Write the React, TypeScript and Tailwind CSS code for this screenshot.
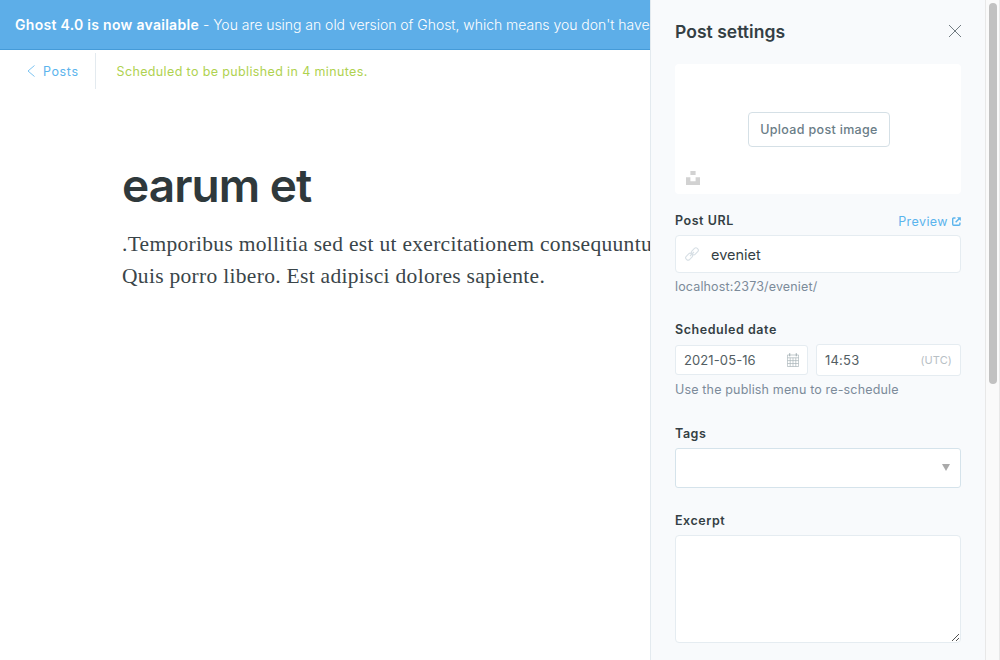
import type { ReactNode } from "react";

function Banner() {
  return (
    <div className="flex h-[50px] shrink-0 items-center overflow-hidden whitespace-nowrap border-b border-[#459bd8] bg-[#5daee8] pl-[15px] text-[14px] leading-5 text-white">
      <strong className="font-semibold tracking-[0.29px]">Ghost 4.0 is now available</strong>
      <span className="whitespace-pre font-light tracking-[-0.03px]">
        {" - You are using an old version of Ghost, which means you don't have"}
      </span>
    </div>
  );
}

function EditorHeader() {
  return (
    <header className="flex h-[43px] shrink-0 items-center text-[12.5px] leading-5">
      <a className="mb-px flex h-9 w-24 items-center border-r border-[#e3eaef] pl-[27px] text-[#5bb4ed]">
        <svg className="mr-2 h-3 w-2" viewBox="0 0 8 12" fill="none" stroke="currentColor" strokeWidth="0.8">
          <path d="M7.5 .5 1 6l6.5 5.5" />
        </svg>
        <span className="pt-0.5 tracking-[0.6px]">Posts</span>
      </a>
      <span className="pl-[20.5px] tracking-[0.37px] text-[#afd250]">Scheduled to be published in 4 minutes.</span>
    </header>
  );
}

function Label({ children }: { children: ReactNode }) {
  return <label className="-mb-px pt-px text-[12.5px] font-semibold leading-4 tracking-[0.55px] text-[#343f44]">{children}</label>;
}

function LinkIcon() {
  return (
    <svg className="h-[14px] w-[14px]" viewBox="0 0 14 14" fill="none" stroke="#d7dfe5" strokeWidth="1.1">
      <rect x="0.4" y="7.4" width="7.4" height="4.6" rx="2" transform="rotate(-45 4.1 9.7)" />
      <rect x="6.2" y="2" width="7.4" height="4.6" rx="2" transform="rotate(-45 9.9 4.3)" />
      <path d="m5 9 4-4" />
    </svg>
  );
}

function ExternalIcon() {
  return (
    <svg className="mb-px h-[9px] w-[9px]" viewBox="0 0 9 9" fill="none" stroke="#5bb4ed" strokeWidth="1.4">
      <path d="M3.5 1H1.7Q.7 1 .7 2v5.2q0 1 1 1h5.2q1 0 1-1V5.5" />
      <path d="M3.6 5.3 7.6 1.3" />
      <path d="M5 .2h3.8V4Z" fill="#5bb4ed" stroke="none" />
    </svg>
  );
}

function CalendarIcon() {
  return (
    <svg className="h-[14px] w-3" viewBox="0 0 12 14" fill="none" stroke="#a9b4b9" strokeWidth="0.7">
      <path d="M.4 2h11.2v11.5H.4zM.4 4.8h11.2M.4 7.6h11.2M.4 10.5h11.2M3.2 4.8v8.7M6 4.8v8.7M8.8 4.8v8.7" />
      <path d="M2.7.3v3M9.3.3v3" strokeWidth="1.2" />
    </svg>
  );
}

function PostSettings() {
  return (
    <aside className="flex h-[660px] w-[335px] shrink-0 flex-col overflow-hidden border-l border-[#e3eaef] bg-[#f8fafc] pl-6 pr-6">
      <div className="flex h-16 shrink-0 items-center justify-between">
        <h2 className="pb-px text-[17.5px] font-semibold leading-6 tracking-[0.03px] text-[#343f44]">Post settings</h2>
        <svg className="mr-[-1px] mb-0.5 h-[14px] w-[14px]" viewBox="0 0 14 14" stroke="#626d74" strokeWidth="0.9">
          <path d="m1 1 12 12M13 1 1 13" />
        </svg>
      </div>
      <div className="flex h-[130px] shrink-0 flex-col items-center rounded bg-white">
        <button className="mt-12 ml-0.5 h-[35px] w-[142px] shrink-0 rounded border border-[#d5e0e6] pt-0.5 text-[12.5px] font-medium tracking-[0.33px] text-[#6a7d87]">
          Upload post image
        </button>
        <svg className="mt-6 ml-[11px] h-[14px] w-[14px] self-start" viewBox="0 0 14 14" fill="#d2d2d2">
          <path d="M4.4 0h5.2v4H4.4zM0 6.2h4.4v4h5.2v-4H14V14H0z" />
        </svg>
      </div>
      <div className="mt-[18px] flex h-[18px] shrink-0 items-start justify-between">
        <Label>Post URL</Label>
        <a className="mt-0.5 flex h-4 items-center gap-1 text-[12.5px] leading-4 tracking-[0.42px] text-[#5bb4ed]">
          Preview
          <ExternalIcon />
        </a>
      </div>
      <div className="mt-[5px] flex h-[38px] shrink-0 items-center rounded border border-[#e5ecf1] bg-white pl-[9px]">
        <LinkIcon />
        <span className="ml-3 pt-0.5 text-[14.5px] leading-5 text-[#343f44]">eveniet</span>
      </div>
      <p className="mt-[5px] shrink-0 text-[12.5px] leading-[18px] tracking-[0.15px] text-[#7c8b9a]">localhost:2373/eveniet/</p>
      <div className="mt-[25px] flex h-4 shrink-0">
        <Label>Scheduled date</Label>
      </div>
      <div className="mt-[7px] flex h-8 shrink-0 items-center gap-2">
        <div className="flex h-[30px] w-[133px] items-center justify-between rounded-[3px] border border-[#e5ecf1] bg-white pl-2 pr-2 text-[13px] text-[#535e63]">
          <span className="pt-px tracking-[0.1px]">2021-05-16</span>
          <CalendarIcon />
        </div>
        <div className="flex h-8 flex-1 items-center justify-between rounded-[3px] border border-[#e5ecf1] bg-white pl-2 pr-2 text-[13px] text-[#535e63]">
          <span className="pt-px tracking-[0.2px]">14:53</span>
          <span className="text-[11px] tracking-[0.1px] text-[#b8c0c5]">(UTC)</span>
        </div>
      </div>
      <p className="mt-[5px] shrink-0 text-[12.5px] leading-[18px] tracking-[0.16px] text-[#7c8b9a]">Use the publish menu to re-schedule</p>
      <div className="mt-[26px] flex h-4 shrink-0">
        <Label>Tags</Label>
      </div>
      <div className="mt-[7px] flex h-10 shrink-0 items-center justify-end rounded-[3px] border border-[#d5e3eb] bg-white pr-[10px]">
        <svg className="mb-0.5 h-[7px] w-2" viewBox="0 0 8 7" fill="#aaa">
          <path d="M0 0h8L4 7Z" />
        </svg>
      </div>
      <div className="mt-6 flex h-4 shrink-0">
        <Label>Excerpt</Label>
      </div>
      <div className="mt-[7px] flex h-[108px] shrink-0 items-end justify-end rounded border border-[#e5ecf1] bg-white p-px">
        <svg className="h-[7px] w-[7px]" viewBox="0 0 7 7" fill="none" stroke="#3d3d3d" strokeWidth="0.9">
          <path d="M0 7 7 0M4 7l3-3" />
        </svg>
      </div>
    </aside>
  );
}

export default function App() {
  return (
    <div className="flex h-[660px] w-[1000px] overflow-hidden bg-white font-['Inter',sans-serif]">
      <main className="flex w-[650px] shrink-0 flex-col overflow-hidden">
        <Banner />
        <EditorHeader />
        <article className="pt-[62px] pl-[122px]">
          <h1 className="text-[46px] font-semibold leading-[60px] tracking-[-0.95px] text-[#2f393c]">earum et</h1>
          <div className="mt-[13px] whitespace-nowrap font-['Liberation_Serif',serif] text-[21.5px] leading-8 tracking-[0.3px] text-[#3a4549]">
            <p>.Temporibus mollitia sed est ut exercitationem consequuntur.</p>
            <p>Quis porro libero. Est adipisci dolores sapiente.</p>
          </div>
        </article>
      </main>
      <PostSettings />
      <div className="h-[660px] w-[15px] border-x border-[#e8e8e8] bg-[#fafafa] pl-[3px] pt-[3px]">
        <div className="h-[381px] w-2 rounded-full bg-[#c1c1c1]" />
      </div>
    </div>
  );
}
